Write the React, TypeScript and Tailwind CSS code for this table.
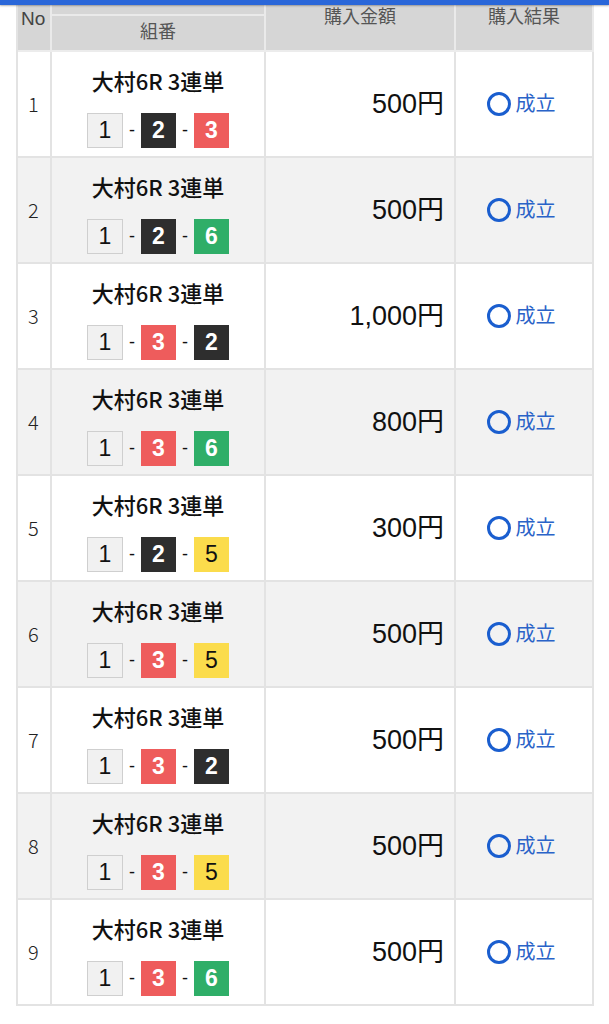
import React from "react";

type Row = { no: number; nums: number[]; amount: string };

const rows: Row[] = [
  { no: 1, nums: [1, 2, 3], amount: "500円" },
  { no: 2, nums: [1, 2, 6], amount: "500円" },
  { no: 3, nums: [1, 3, 2], amount: "1,000円" },
  { no: 4, nums: [1, 3, 6], amount: "800円" },
  { no: 5, nums: [1, 2, 5], amount: "300円" },
  { no: 6, nums: [1, 3, 5], amount: "500円" },
  { no: 7, nums: [1, 3, 2], amount: "500円" },
  { no: 8, nums: [1, 3, 5], amount: "500円" },
  { no: 9, nums: [1, 3, 6], amount: "500円" },
];

function Box({ n }: { n: number }) {
  if (n === 1)
    return (
      <span className="flex h-[35px] w-[36px] items-center justify-center border border-[#cfcfcf] bg-[#f1f1f1] text-[23px] text-[#111]">
        1
      </span>
    );
  if (n === 2)
    return (
      <span className="flex h-[35px] w-[35px] items-center justify-center bg-[#2e2e2e] text-[23px] font-bold text-white">
        2
      </span>
    );
  if (n === 3)
    return (
      <span className="flex h-[35px] w-[35px] items-center justify-center bg-[#ee5c5c] text-[23px] font-bold text-white">
        3
      </span>
    );
  if (n === 5)
    return (
      <span className="flex h-[35px] w-[35px] items-center justify-center bg-[#fbdc4c] text-[23px] text-[#111]">
        5
      </span>
    );
  return (
    <span className="flex h-[35px] w-[35px] items-center justify-center bg-[#2fae68] text-[23px] font-bold text-white">
      {n}
    </span>
  );
}

export default function App() {
  return (
    <div
      className="relative h-[1024px] w-[609px] overflow-hidden bg-white"
      style={{ fontFamily: '"Liberation Sans", "Noto Sans CJK JP", sans-serif' }}
    >
      <div className="absolute left-0 top-0 z-10 h-[5px] w-full bg-[#2a67d9] shadow-[0_1px_2px_rgba(0,0,0,0.3)]" />
      <div className="pl-[16px] pt-[5px]">
        <div className="grid w-[576px] grid-cols-[34px_214px_190px_138px] border-l-2 border-[#e3e3e3] bg-[#e3e3e3]">
          {/* header */}
          <div className="row-span-2 h-[45px] border-r-2 border-[#eaeaea] bg-[#d6d6d6] pl-[3px] pt-[3px] text-[19px] font-light leading-[22px] text-[#444]">
            No
          </div>
          <div className="h-[11px] overflow-hidden border-b-2 border-r-2 border-[#eaeaea] bg-[#d6d6d6]">
            <div className="-mt-[17px] flex justify-center gap-[70px] text-[16px] leading-[20px] text-[#555]">
              <span>大村</span>
              <span>投票</span>
            </div>
          </div>
          <div className="row-span-2 border-r-2 border-[#eaeaea] bg-[#d6d6d6] text-center text-[18px] leading-[24px] text-[#555]">
            購入金額
          </div>
          <div className="row-span-2 border-r-2 border-[#eaeaea] bg-[#d6d6d6] text-center text-[18px] leading-[24px] text-[#555]">
            購入結果
          </div>
          <div className="h-[34px] border-r-2 border-[#eaeaea] bg-[#d6d6d6] pt-[4px] text-center text-[18px] leading-[24px] text-[#555]">
            組番
          </div>
          <div className="col-span-4 h-[2px] bg-[#ececec]" />
          {rows.map((r, i) => {
            const bg = i % 2 === 0 ? "bg-white" : "bg-[#f2f2f2]";
            return (
              <React.Fragment key={r.no}>
                <div
                  className={`flex h-[104px] items-center border-r-2 border-[#e3e3e3] pl-[10px] text-[20px] font-light text-[#222] ${bg}`}
                  style={{ fontFamily: '"Noto Sans CJK JP", sans-serif' }}
                >
                  {r.no}
                </div>
                <div className={`flex h-[104px] flex-col items-center border-r-2 border-[#e3e3e3] pt-[13px] ${bg}`}>
                  <div className="text-[22px] font-medium leading-[30px] text-[#111]" style={{ fontFamily: '"Noto Sans CJK JP", sans-serif' }}>
                    大村6R 3連単
                  </div>
                  <div
                    className="mt-[18px] flex items-center gap-[6px] text-[#111]"
                    style={{ fontFamily: '"Liberation Sans", sans-serif' }}
                  >
                    <Box n={r.nums[0]} />
                    <span className="text-[18px]">-</span>
                    <Box n={r.nums[1]} />
                    <span className="text-[18px]">-</span>
                    <Box n={r.nums[2]} />
                  </div>
                </div>
                <div
                  className={`flex h-[104px] items-center justify-end border-r-2 border-[#e3e3e3] pr-[10px] text-[27px] text-[#111] ${bg}`}
                >
                  {r.amount}
                </div>
                <div className={`flex h-[104px] items-center justify-center gap-[5px] border-r-2 border-[#e3e3e3] pr-[6px] ${bg}`}>
                  <span className="h-[24px] w-[24px] rounded-full border-[3px] border-[#1a5ecf]" />
                  <span className="text-[20px] text-[#2a63c8]">成立</span>
                </div>
                <div className="col-span-4 h-[2px] bg-[#e3e3e3]" />
              </React.Fragment>
            );
          })}
        </div>
      </div>
    </div>
  );
}
